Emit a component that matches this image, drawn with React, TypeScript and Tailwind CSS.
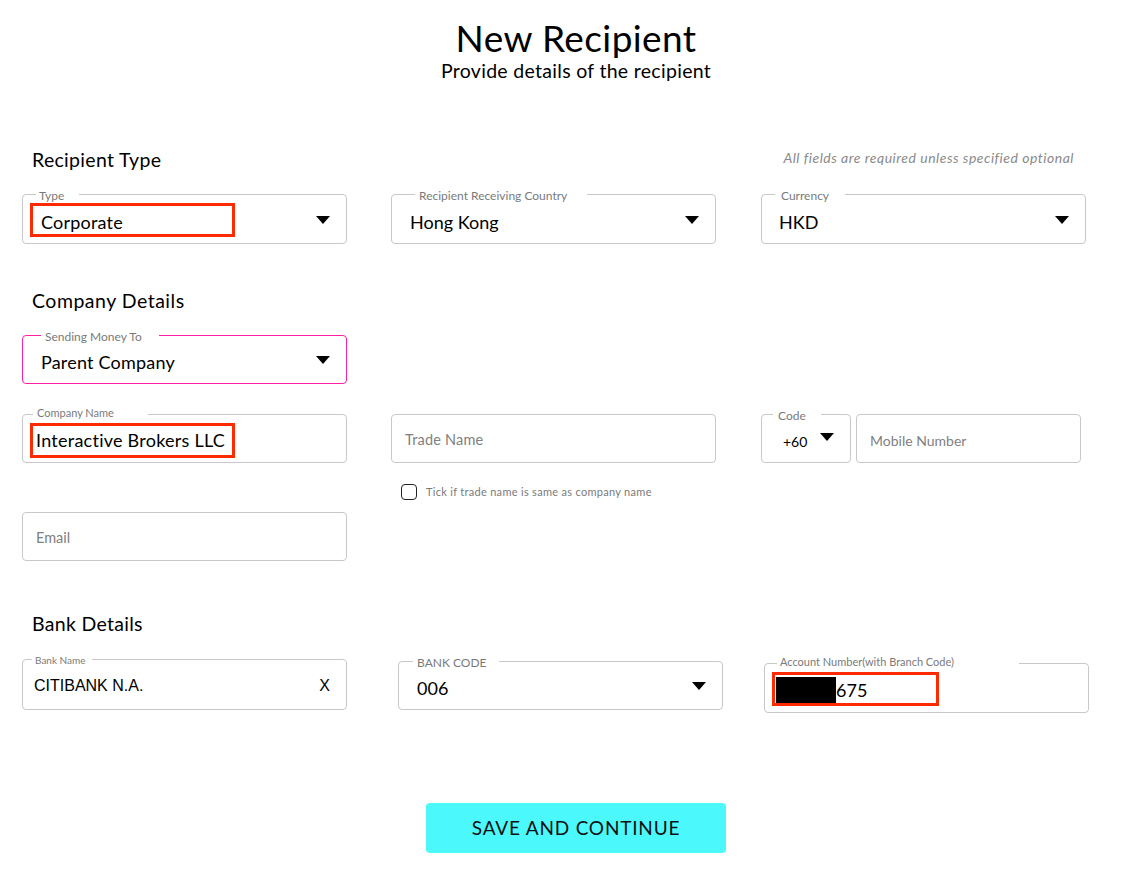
import React from "react";

type BoxProps = {
  w: string;
  h?: string;
  extra?: string;
  border?: string;
  label?: string;
  labelPos?: string;
  labelText?: string;
  children?: React.ReactNode;
};

function Tri({ cls }: { cls: string }) {
  return (
    <svg className={cls} width="14" height="8" viewBox="0 0 14 8">
      <path d="M0 0 L14 0 L7 8 Z" fill="#000" />
    </svg>
  );
}

function Box({ w, h = "h-[50px]", extra = "", border = "border-[#c8c8c8]", label, labelPos = "", labelText = "text-[11px]", children }: BoxProps) {
  return (
    <div className={`relative shrink-0 border rounded-[4px] ${border} ${w} ${h} ${extra}`}>
      {label && (
        <span className={`absolute bg-white whitespace-nowrap leading-[14px] text-[#7a7a7a] ${labelText} ${labelPos}`}>
          {label}
        </span>
      )}
      {children}
    </div>
  );
}

export default function App() {
  return (
    <div className="w-[1128px] h-[873px] bg-white text-black overflow-hidden" style={{ fontFamily: "Lato, 'Noto Sans', sans-serif" }}>
      <div className="pt-[17px] pl-[24px] text-center">
        <h1 className="text-[37px] leading-[42px] tracking-[0.4px]">New Recipient</h1>
        <p className="text-[19.5px] leading-[24px] tracking-[0.3px]">Provide details of the recipient</p>
      </div>

      {/* Recipient Type */}
      <div className="mt-[65px] flex items-center justify-between pl-[32px] pr-[54px]">
        <h2 className="text-[19.5px] leading-[24px] tracking-[0.3px]">Recipient Type</h2>
        <span className="text-[14px] italic tracking-[0.5px] text-[#8a8a8a] -mt-[6px]">All fields are required unless specified optional</span>
      </div>

      <div className="mt-[22px] flex pl-[22px]">
        <Box w="w-[325px]" label="Type" labelText="text-[12px]" labelPos="top-[-6px] left-[13px] w-[43px] pl-[3px]">
          <div className="absolute left-[7px] top-[8px] w-[205px] h-[34px] border-[3px] border-[#ff2a00]" />
          <div className="h-full flex items-center pl-[18px] pt-[6px] text-[18px] tracking-[0.2px]">Corporate</div>
          <Tri cls="absolute right-[16px] top-[21px]" />
        </Box>
        <Box w="w-[325px]" extra="ml-[44px]" label="Recipient Receiving Country" labelText="text-[12px]" labelPos="top-[-6px] left-[23px] w-[172px] pl-[4px]">
          <div className="h-full flex items-center pl-[18px] pt-[6px] text-[18px]">Hong Kong</div>
          <Tri cls="absolute right-[16px] top-[21px]" />
        </Box>
        <Box w="w-[325px]" extra="ml-[45px]" label="Currency" labelText="text-[12px]" labelPos="top-[-6px] left-[13px] w-[70px] pl-[6px]">
          <div className="h-full flex items-center pl-[17px] pt-[6px] text-[18px]">HKD</div>
          <Tri cls="absolute right-[16px] top-[21px]" />
        </Box>
      </div>

      {/* Company Details */}
      <h2 className="mt-[45px] pl-[32px] text-[19.5px] leading-[24px] tracking-[0.5px]">Company Details</h2>

      <div className="mt-[22px] flex pl-[22px]">
        <Box w="w-[325px]" h="h-[49px]" border="border-[#ff1fa5]" label="Sending Money To" labelText="text-[12px]" labelPos="top-[-6px] left-[18px] w-[118px] pl-[4px]">
          <div className="h-full flex items-center pl-[18px] pt-[6px] text-[18px] tracking-[0.2px]">Parent Company</div>
          <Tri cls="absolute right-[16px] top-[20px]" />
        </Box>
      </div>

      <div className="mt-[30px] flex pl-[22px]">
        <Box w="w-[325px]" h="h-[49px]" label="Company Name" labelPos="top-[-9px] left-[10px] w-[115px] pl-[4px]">
          <div className="absolute left-[7px] top-[8px] w-[205px] h-[35px] border-[3px] border-[#ff2a00]" />
          <div className="h-full flex items-center pl-[13px] pt-[4px] text-[18px] tracking-[0.25px]">Interactive Brokers LLC</div>
        </Box>
        <Box w="w-[325px]" h="h-[49px]" extra="ml-[44px]">
          <div className="h-full flex items-center pl-[13px] pt-[3px] text-[14.5px] tracking-[0.2px] text-[#808080]">Trade Name</div>
        </Box>
        <Box w="w-[90px]" h="h-[49px]" extra="ml-[45px]" label="Code" labelText="text-[12px]" labelPos="top-[-6px] left-[11px] w-[48px] pl-[5px]">
          <div className="h-full flex items-center pl-[21px] pt-[6px] text-[14px]">+60</div>
          <Tri cls="absolute right-[16px] top-[18px]" />
        </Box>
        <Box w="w-[225px]" h="h-[49px]" extra="ml-[5px]">
          <div className="h-full flex items-center pl-[13px] pt-[3px] text-[14px] text-[#808080]">Mobile Number</div>
        </Box>
      </div>

      <div className="mt-[21px] flex items-center pl-[401px] h-[16px]">
        <div className="w-[16px] h-[16px] border-[1.5px] border-[#222] rounded-[4px]" />
        <span className="ml-[9px] text-[11px] tracking-[0.3px] text-[#7a7a7a]">Tick if trade name is same as company name</span>
      </div>

      <div className="mt-[12px] flex pl-[22px]">
        <Box w="w-[325px]" h="h-[49px]">
          <div className="h-full flex items-center pl-[13px] pt-[3px] text-[14.5px] text-[#808080]">Email</div>
        </Box>
      </div>

      {/* Bank Details */}
      <h2 className="mt-[51px] pl-[32px] text-[19.5px] leading-[24px] tracking-[0.3px]">Bank Details</h2>

      <div className="mt-[23px] flex items-start pl-[22px]">
        <Box w="w-[325px]" h="h-[51px]" label="Bank Name" labelText="text-[10px]" labelPos="top-[-7px] left-[9px] w-[60px] pl-[3px]">
          <div className="h-full flex items-center justify-between pl-[11px] pr-[16px] pt-[2px] text-[16px]" style={{ fontFamily: "'Liberation Sans', Arial, sans-serif" }}>
            <span>CITIBANK N.A.</span>
            <span>X</span>
          </div>
        </Box>
        <Box w="w-[325px]" h="h-[49px]" extra="ml-[51px] mt-[2px]" label="BANK CODE" labelText="text-[12px]" labelPos="top-[-6px] left-[14px] w-[86px] pl-[4px]">
          <div className="h-full flex items-center pl-[18px] pt-[6px] text-[18px]">006</div>
          <Tri cls="absolute right-[16px] top-[20px]" />
        </Box>
        <Box w="w-[325px]" h="h-[50px]" extra="ml-[41px] mt-[4px]" label="Account Number(with Branch Code)" labelPos="top-[-9px] left-[12px] w-[242px] pl-[3px]">
          <div className="absolute left-[7px] top-[8px] w-[167px] h-[34px] border-[3px] border-[#ff2a00]" />
          <div className="h-full flex items-center pl-[11px] pt-[4px] text-[18px]">
            <span className="w-[60px] h-[27px] bg-black inline-block" />
            <span>675</span>
          </div>
        </Box>
      </div>

      <div className="mt-[90px] pl-[24px] flex justify-center">
        <button className="w-[300px] h-[50px] bg-[#4bf9fd] rounded-[4px] text-[19px] tracking-[0.8px] text-[#111]">
          SAVE AND CONTINUE
        </button>
      </div>
    </div>
  );
}
